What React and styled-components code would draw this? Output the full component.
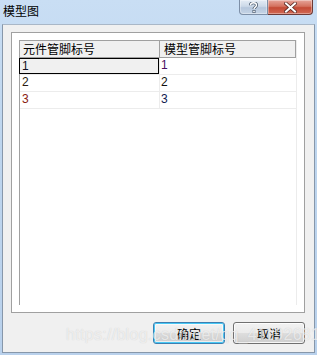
import React from 'react';
import styled, { createGlobalStyle } from 'styled-components';

const Global = createGlobalStyle`
  html, body {
    margin: 0;
    padding: 0;
  }
  body {
    width: 317px;
    height: 355px;
    overflow: hidden;
    font-family: "Noto Sans CJK SC", "Liberation Sans", sans-serif;
  }
`;

const Window = styled.div`
  position: relative;
  width: 317px;
  height: 355px;
  display: flex;
  flex-direction: column;
  background: linear-gradient(180deg, #c9def4 0%, #bdd5ee 40%, #b9d1ec 100%);
  box-sizing: border-box;
`;

const TitleBar = styled.div`
  height: 24px;
  display: flex;
  align-items: flex-start;
  flex-shrink: 0;
`;

const Title = styled.span`
  font-size: 12px;
  line-height: 12px;
  color: #000;
  margin: 5px 0 0 3px;
`;

const Caption = styled.div`
  margin-left: auto;
  margin-right: 4px;
  display: flex;
`;

const CaptionButton = styled.div`
  height: 15px;
  width: ${p => (p.$close ? '45px' : '29px')};
  box-sizing: border-box;
  display: flex;
  align-items: center;
  justify-content: center;
  border: 1px solid ${p => (p.$close ? '#6e3a36' : '#7d8fa7')};
  border-top: 0;
  border-left: ${p => (p.$close ? '0' : '1px solid #7d8fa7')};
  border-radius: ${p => (p.$close ? '0 0 4px 0' : '0 0 0 4px')};
  background: ${p =>
    p.$close
      ? 'linear-gradient(180deg, #e6a59a 0%, #d4725f 45%, #c44a35 55%, #d26a55 100%)'
      : 'linear-gradient(180deg, #e4ecf5 0%, #ccd9e8 45%, #b6c7dc 55%, #c5d4e6 100%)'};
  box-shadow: inset 0 0 0 1px rgba(255, 255, 255, 0.35);
`;

const Client = styled.div`
  flex: 1;
  margin: 0 2px 2px 2px;
  background: #f0f0f0;
  border: 1px solid #8797aa;
  border-top-color: #a9b7c7;
  display: flex;
  flex-direction: column;
  padding: 7px 9px 8px 8px;
  min-height: 0;
`;

const Panel = styled.div`
  height: 281px;
  box-sizing: border-box;
  border: 1px solid #a0a0a0;
  background: #fff;
  padding: 7px;
  display: flex;
  flex-direction: column;
`;

const List = styled.div`
  flex: 1;
  border-left: 1px solid #a0a0a0;
  border-right: 1px solid #ececec;
  display: flex;
  flex-direction: column;
`;

const Header = styled.div`
  display: grid;
  grid-template-columns: 139px 1fr;
  height: 18px;
  box-sizing: border-box;
  background: #f0f0f0;
  border: 1px solid #a0a0a0;
  margin-left: -1px;
`;

const HeaderCell = styled.div`
  font-size: 12px;
  line-height: 16px;
  color: #000;
  padding-left: ${p => (p.$first ? '3px' : '4px')};
  border-left: ${p => (p.$first ? '0' : '1px solid #a0a0a0')};
  white-space: nowrap;
`;

const Row = styled.div`
  display: grid;
  grid-template-columns: 139px 1fr;
  height: 17px;
  box-sizing: border-box;
  border-bottom: 1px solid #ececec;
`;

const Cell = styled.div`
  font-family: "Liberation Sans", "DejaVu Sans", sans-serif;
  font-size: 12px;
  line-height: 15px;
  padding-left: ${p => (p.$first ? '2px' : '1px')};
  color: ${p => p.$color || '#000'};
  box-sizing: border-box;
  border-left: ${p => (p.$first ? '0' : '1px solid #ececec')};
  ${p =>
    p.$focus &&
    `
    background: #f0f0f0;
    border: 1px solid #000;
    margin-left: -1px;
    padding-left: 2px;
    line-height: 14px;
  `}
`;

const Buttons = styled.div`
  display: flex;
  justify-content: flex-end;
  gap: 8px;
  margin-top: 9px;
`;

const Button = styled.button`
  width: 72px;
  height: 22px;
  padding: 0;
  font-family: "Noto Sans CJK SC", "Liberation Sans", sans-serif;
  font-size: 12px;
  color: #000;
  border-radius: 3px;
  border: 1px solid ${p => (p.$default ? '#3c7fb1' : '#707070')};
  background: linear-gradient(180deg, #f2f2f2 0%, #ebebeb 48%, #dddddd 52%, #cfcfcf 100%);
  box-shadow: ${p =>
    p.$default
      ? 'inset 0 0 0 1px #48c8f5, inset 0 0 0 2px rgba(255,255,255,0.6)'
      : 'inset 0 0 0 1px rgba(255,255,255,0.8)'};
`;

/* csdn watermark that sits over the bottom of the dialog */
const Watermark = styled.span`
  position: absolute;
  left: 66px;
  top: 326px;
  font-family: "Liberation Sans", sans-serif;
  font-size: 16px;
  letter-spacing: 0.3px;
  color: rgba(250, 250, 250, 0.7);
  text-shadow: 0 0 1px rgba(120, 120, 120, 0.3);
  pointer-events: none;
  white-space: nowrap;
`;

const rows = [
  { a: '1', b: '1', ac: '#101020', bc: '#4a1060', focus: true },
  { a: '2', b: '2', ac: '#2a1a10', bc: '#101010' },
  { a: '3', b: '3', ac: '#8a2010', bc: '#102050' },
];

function HelpIcon() {
  return (
    <svg width="9" height="11" viewBox="0 0 9 11">
      <path
        d="M1.5 3.2 C1.5 1.5 3 0.8 4.5 0.8 C6.2 0.8 7.5 1.8 7.5 3.3 C7.5 5 5 5.2 5 7"
        fill="none"
        stroke="#4a5a6e"
        strokeWidth="3"
      />
      <path
        d="M1.5 3.2 C1.5 1.5 3 0.8 4.5 0.8 C6.2 0.8 7.5 1.8 7.5 3.3 C7.5 5 5 5.2 5 7"
        fill="none"
        stroke="#fff"
        strokeWidth="1.4"
      />
      <rect x="3.5" y="8" width="3" height="3" fill="#4a5a6e" />
      <rect x="4.2" y="8.7" width="1.6" height="1.6" fill="#fff" />
    </svg>
  );
}

function CloseIcon() {
  return (
    <svg width="13" height="11" viewBox="0 0 13 11">
      <path d="M2 1.5 L11 9.5 M11 1.5 L2 9.5" stroke="#5a2a24" strokeWidth="3.6" strokeLinecap="square" />
      <path d="M2 1.5 L11 9.5 M11 1.5 L2 9.5" stroke="#fff" strokeWidth="2" strokeLinecap="square" />
    </svg>
  );
}

export default function App() {
  return (
    <>
      <Global />
      <Window>
        <TitleBar>
          <Title>模型图</Title>
          <Caption>
            <CaptionButton>
              <HelpIcon />
            </CaptionButton>
            <CaptionButton $close>
              <CloseIcon />
            </CaptionButton>
          </Caption>
        </TitleBar>
        <Client>
          <Panel>
            <List>
              <Header>
                <HeaderCell $first>元件管脚标号</HeaderCell>
                <HeaderCell>模型管脚标号</HeaderCell>
              </Header>
              {rows.map(r => (
                <Row key={r.a}>
                  <Cell $first $focus={r.focus} $color={r.ac}>
                    {r.a}
                  </Cell>
                  <Cell $color={r.bc}>{r.b}</Cell>
                </Row>
              ))}
            </List>
          </Panel>
          <Buttons>
            <Button $default>确定</Button>
            <Button>取消</Button>
          </Buttons>
        </Client>
        <Watermark>https://blog.csdn.net/qq_41192681</Watermark>
      </Window>
    </>
  );
}
